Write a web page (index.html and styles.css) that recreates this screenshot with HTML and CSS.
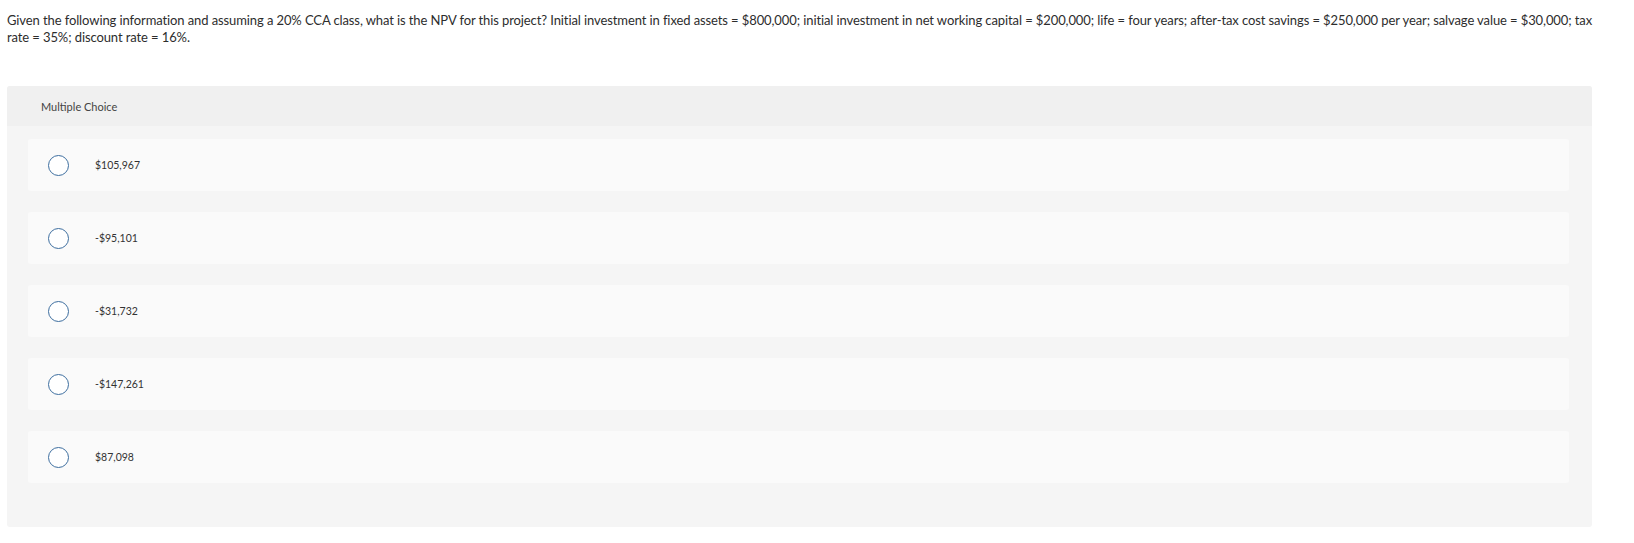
FILE: index.html
```html
<!DOCTYPE html>
<html>
<head>
<meta charset="utf-8">
<link rel="stylesheet" href="styles.css">
</head>
<body>
<div class="page">
  <p class="question">Given the following information and assuming a 20% CCA class, what is the NPV for this project? Initial investment in fixed assets = $800,000; initial investment in net working capital = $200,000; life = four years; after-tax cost savings = $250,000 per year; salvage value = $30,000; tax rate = 35%; discount rate = 16%.</p>
  <div class="mc">
    <div class="mc-header">Multiple Choice</div>
    <div class="mc-body">
      <div class="option"><span class="radio"></span><span class="label">$105,967</span></div>
      <div class="option"><span class="radio"></span><span class="label">-$95,101</span></div>
      <div class="option"><span class="radio"></span><span class="label">-$31,732</span></div>
      <div class="option"><span class="radio"></span><span class="label">-$147,261</span></div>
      <div class="option"><span class="radio"></span><span class="label">$87,098</span></div>
    </div>
  </div>
</div>
</body>
</html>
```
FILE: styles.css
```css
html, body {
  margin: 0;
  padding: 0;
  background: #ffffff;
}
body {
  font-family: "Lato", "Liberation Sans", sans-serif;
  color: #333333;
}
.page {
  padding: 12px 42px 0 7px;
}
.question {
  margin: 0 -8px 0 0;
  font-size: 13px;
  line-height: 17px;
  letter-spacing: -0.1px;
  color: #2d2d2d;
}
.mc {
  margin-top: 40px;
  background: #f5f5f5;
  border-radius: 3px;
  overflow: hidden;
}
.mc-header {
  height: 40px;
  background: #f0f0f0;
  display: flex;
  align-items: center;
  padding-left: 34px;
  font-size: 11px;
  color: #444444;
}
.mc-body {
  padding: 13px 23px 44px 21px;
  display: flex;
  flex-direction: column;
  gap: 21px;
}
.option {
  height: 52px;
  background: #fafafa;
  border-radius: 3px;
  display: flex;
  align-items: center;
  padding-left: 20px;
}
.radio {
  width: 19px;
  height: 19px;
  border: 1.5px solid #3d6e9f;
  border-radius: 50%;
  background: #ffffff;
  flex: none;
}
.label {
  margin-left: 26px;
  font-size: 10.5px;
  color: #333333;
}
```
